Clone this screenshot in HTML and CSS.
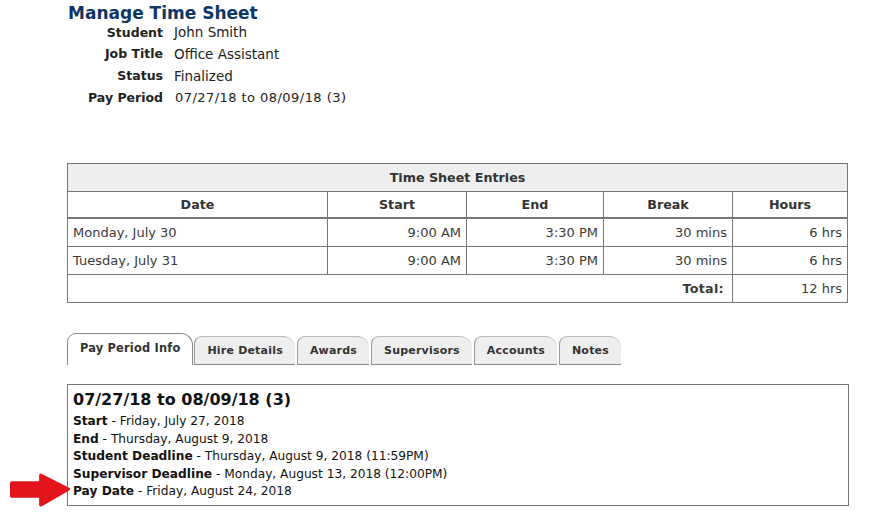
FILE: index.html
```html
<!DOCTYPE html>
<html>
<head>
<meta charset="utf-8">
<link rel="stylesheet" href="styles.css">
</head>
<body>
<div class="page">
  <h1 class="title">Manage Time Sheet</h1>
  <dl class="meta">
    <dt>Student</dt><dd class="big">John Smith</dd>
    <dt>Job Title</dt><dd class="big">Office Assistant</dd>
    <dt>Status</dt><dd class="big">Finalized</dd>
    <dt>Pay Period</dt><dd class="mono">07/27/18 to 08/09/18 (3)</dd>
  </dl>

  <table class="entries">
    <colgroup>
      <col class="c1"><col class="c2"><col class="c3"><col class="c4"><col class="c5">
    </colgroup>
    <thead>
      <tr><th colspan="5" class="caption">Time Sheet Entries</th></tr>
      <tr class="heads"><th>Date</th><th>Start</th><th>End</th><th>Break</th><th>Hours</th></tr>
    </thead>
    <tbody>
      <tr><td class="l">Monday, July 30</td><td>9:00 AM</td><td>3:30 PM</td><td>30 mins</td><td>6 hrs</td></tr>
      <tr><td class="l">Tuesday, July 31</td><td>9:00 AM</td><td>3:30 PM</td><td>30 mins</td><td>6 hrs</td></tr>
      <tr class="sum"><td colspan="4" class="total">Total:</td><td>12 hrs</td></tr>
    </tbody>
  </table>

  <div class="tabs">
    <div class="tab active">Pay Period Info</div>
    <div class="tab">Hire Details</div>
    <div class="tab">Awards</div>
    <div class="tab">Supervisors</div>
    <div class="tab">Accounts</div>
    <div class="tab">Notes</div>
  </div>

  <div class="panel">
    <h2 class="period">07/27/18 to 08/09/18 (3)</h2>
    <div class="line"><b>Start</b> - Friday, July 27, 2018</div>
    <div class="line"><b>End</b> - Thursday, August 9, 2018</div>
    <div class="line"><b>Student Deadline</b> - Thursday, August 9, 2018 (11:59PM)</div>
    <div class="line"><b>Supervisor Deadline</b> - Monday, August 13, 2018 (12:00PM)</div>
    <div class="line"><b>Pay Date</b> - Friday, August 24, 2018</div>
  </div>
</div>
<svg class="arrow" width="62" height="35" viewBox="0 0 66 38" preserveAspectRatio="none">
  <path d="M2 9 L31 9 L31 2 Q32 0 34 1 L63 16 Q65 17 63 19 L34 36 Q32 37 31 35 L31 27 L2 27 Q0 27 0 25 L0 11 Q0 9 2 9 Z" fill="#e3141c"/>
</svg>
</body>
</html>
```
FILE: styles.css
```css
html, body {
  margin: 0;
  padding: 0;
  background: #fff;
}
body {
  font-family: "DejaVu Sans", Verdana, sans-serif;
  color: #222;
  position: relative;
  width: 891px;
  height: 531px;
  overflow: hidden;
}
.page {
  padding-left: 67px;
  padding-top: 4px;
}
.title {
  margin: 0 0 0 1px;
  font-size: 17px;
  line-height: 18px;
  font-weight: bold;
  color: #0d3565;
}
.meta {
  display: grid;
  grid-template-columns: 96px auto;
  column-gap: 11px;
  margin: -1px 0 0 0;
  grid-template-rows: 22px 21.5px 22px 21.5px;
  align-items: center;
}
.meta dt {
  text-align: right;
  font-weight: bold;
  font-size: 12.5px;
  color: #222;
}
.meta dd {
  margin: 0;
  font-size: 12.5px;
  color: #222;
}
.meta dd.big {
  font-size: 13.5px;
}
.meta dd.mono {
  font-size: 13px;
  letter-spacing: 0.45px;
  padding-left: 1px;
}
.entries {
  margin-top: 55px;
  width: 780px;
  border-collapse: collapse;
  table-layout: fixed;
  font-size: 13px;
  color: #3a3a3a;
}
.c1 { width: 260px; }
.c2 { width: 139px; }
.c3 { width: 137px; }
.c4 { width: 129px; }
.c5 { width: 115px; }
.entries th, .entries td {
  border: 1px solid #777;
  padding: 0 5px;
}
.entries td {
  height: 27px;
  text-align: right;
}
.entries th {
  font-weight: bold;
  font-size: 12.7px;
  color: #333;
  text-align: center;
}
.entries th.caption {
  background: #eeeeee;
  height: 27px;
}
.entries tr.heads th {
  border-bottom: 2px solid #777;
  height: 25px;
}
.entries td.l {
  text-align: left;
}
.entries td.total {
  font-weight: bold;
  font-size: 12.7px;
  letter-spacing: 0.3px;
  padding-right: 8px;
}
.tabs {
  display: flex;
  align-items: flex-end;
  margin-top: 30px;
  gap: 2px;
  width: max-content;
  white-space: nowrap;
}
.tab {
  flex: none;
  font-size: 11px;
  font-weight: bold;
  color: #333;
  background: #eeeeee;
  line-height: 28px;
  padding: 0 12px;
  border: 1px solid #bbb;
  border-left-color: #999;
  border-bottom: 1px solid #888;
  border-right: none;
  border-radius: 8px 12px 0 0;
  box-sizing: border-box;
  height: 29px;
  letter-spacing: 0.2px;
}
.tab.active {
  font-size: 11.4px;
  background: #fff;
  border: 1px solid #888;
  border-bottom: none;
  height: 32px;
  padding: 0 12px;
  border-radius: 9px 12px 0 0;
  margin-right: -1px;
}
.panel {
  margin-top: 19px;
  width: 782px;
  height: 122px;
  border: 1px solid #777;
  box-sizing: border-box;
  padding: 5px 5px 0 5px;
  color: #111;
  font-size: 12.2px;
}
.period {
  margin: 0 0 3px 0;
  font-size: 16px;
  font-weight: bold;
  line-height: 20px;
}
.line {
  line-height: 17.5px;
}
.arrow {
  position: absolute;
  left: 10px;
  top: 473px;
}
```
